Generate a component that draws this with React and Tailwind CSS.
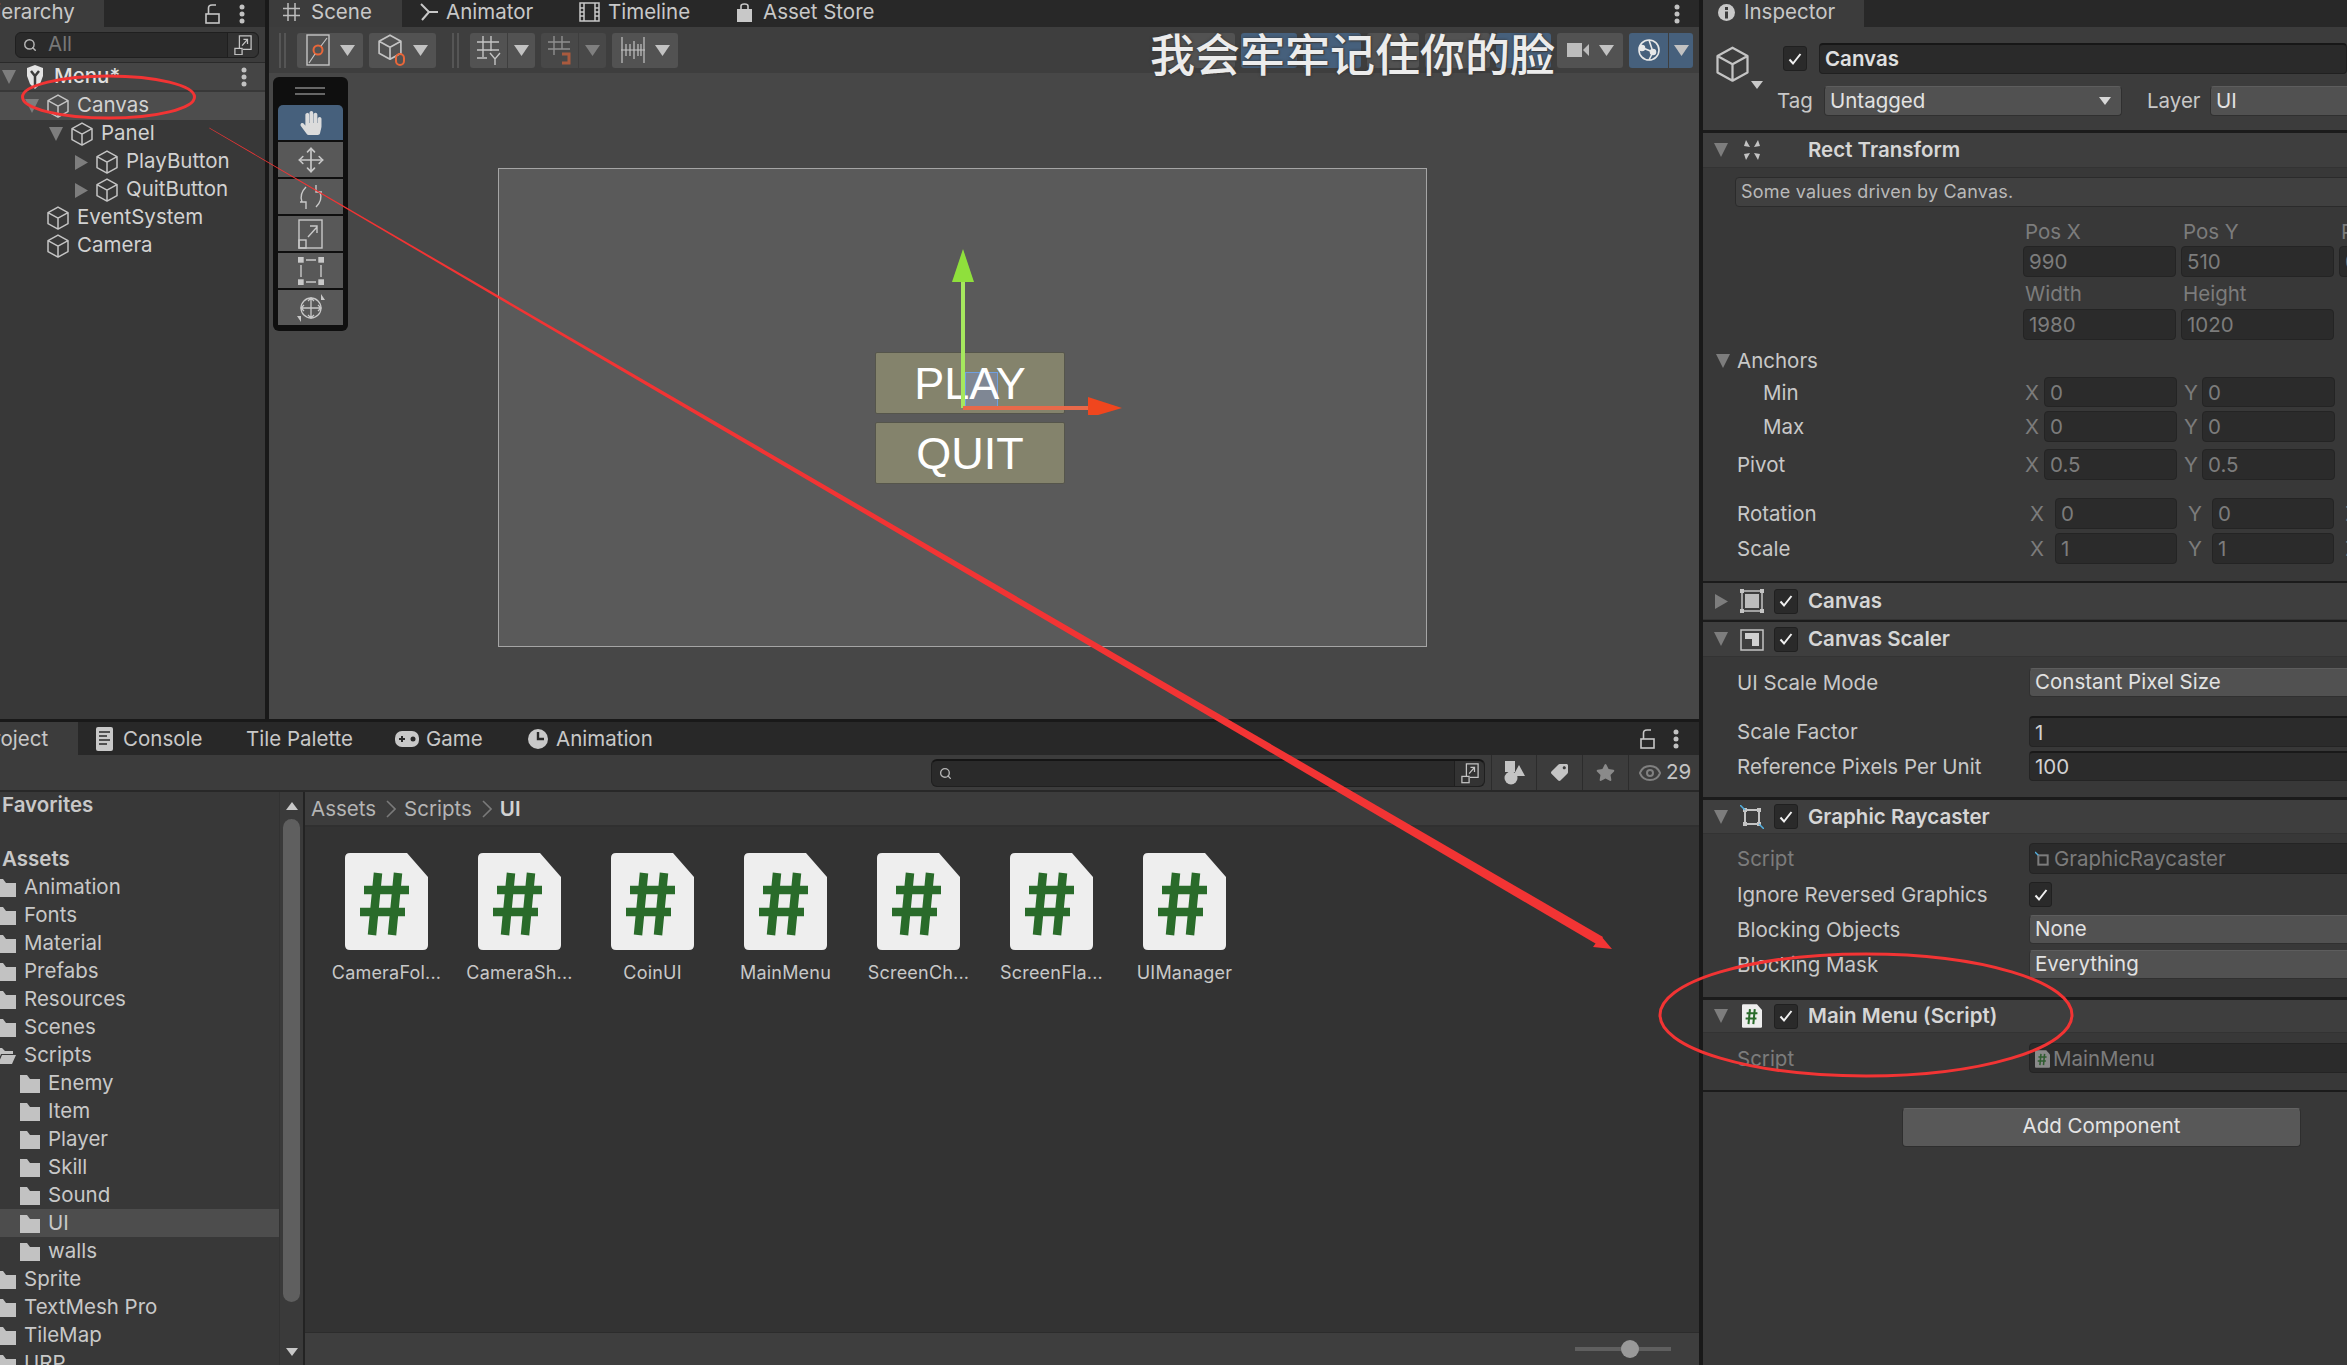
import { FaHandPaper, FaStar, FaTag } from 'react-icons/fa';
import { Move, Search, Eye } from 'lucide-react';

const HIER = [
  { name: 'Canvas', depth: 0, fold: 'down', sel: true },
  { name: 'Panel', depth: 1, fold: 'down' },
  { name: 'PlayButton', depth: 2, fold: 'right' },
  { name: 'QuitButton', depth: 2, fold: 'right' },
  { name: 'EventSystem', depth: 0 },
  { name: 'Camera', depth: 0 },
];

const TREE = [
  ['Animation', 0], ['Fonts', 0], ['Material', 0], ['Prefabs', 0], ['Resources', 0], ['Scenes', 0],
  ['Scripts', 0, 'open'], ['Enemy', 1], ['Item', 1], ['Player', 1], ['Skill', 1], ['Sound', 1],
  ['UI', 1, 'sel'], ['walls', 1], ['Sprite', 0], ['TextMesh Pro', 0], ['TileMap', 0], ['URP', 0],
];

const FILES = ['CameraFol...', 'CameraSh...', 'CoinUI', 'MainMenu', 'ScreenCh...', 'ScreenFla...', 'UIManager'];

function Tri({ dir = 'down', dim }) {
  const fill = dim ? '#6a6a6a' : '#7d7d7d';
  if (dir === 'right') {
    return (
      <svg width="13" height="15" viewBox="0 0 13 15" className="shrink-0">
        <path d="M0 0 L13 7.5 L0 15 Z" fill={fill} />
      </svg>
    );
  }
  return (
    <svg width="14" height="14" viewBox="0 0 14 14" className="shrink-0">
      <path d="M0 0 H14 L7 14 Z" fill={fill} />
    </svg>
  );
}

function Caret({ color = '#c2c2c2', small }) {
  return (
    <svg width={small ? 12 : 15} height={small ? 8 : 11} viewBox="0 0 15 11" preserveAspectRatio="none" className="shrink-0">
      <path d="M0 0 H15 L7.5 11 Z" fill={color} />
    </svg>
  );
}

function Cube({ size = 22, color = '#c4c4c4' }) {
  return (
    <svg width={size} height={size * 1.1} viewBox="0 0 22 24" fill="none" stroke={color} strokeWidth="1.5" strokeLinejoin="round" className="shrink-0">
      <path d="M11 1 L21 6.5 V17.5 L11 23 L1 17.5 V6.5 Z M1 6.5 L11 12 L21 6.5 M11 12 V23" />
    </svg>
  );
}

function Folder({ open }) {
  return (
    <svg width="20" height="19" viewBox="0 0 20 19" className="shrink-0">
      {open
        ? <path d="M0 2 H6 L9 5 H17 V8 H5 L1 18 H0 Z M6 9 H20 L16 18 H2 Z" fill="#c2c2c2" />
        : <path d="M0 1 H7 L10 5 H20 V19 H0 Z" fill="#c2c2c2" />}
    </svg>
  );
}

function ScriptIcon({ width = 83, height = 97, sheet = '#eeeeee', green = '#296b2a' }) {
  return (
    <svg width={width} height={height} viewBox="0 0 83 97" className="shrink-0">
      <path d="M5 0 H62 L83 24 V92 Q83 97 78 97 H5 Q0 97 0 92 V5 Q0 0 5 0 Z" fill={sheet} />
      <path d="M33 20 L27 82 M53 20 L47 82 M19 37 H64 M15 59 H60" stroke={green} strokeWidth="8.5" fill="none" />
    </svg>
  );
}

function Dots() {
  return (
    <svg width="6" height="20" viewBox="0 0 6 20" className="shrink-0">
      <circle cx="3" cy="3" r="2.5" fill="#c2c2c2" />
      <circle cx="3" cy="10" r="2.5" fill="#c2c2c2" />
      <circle cx="3" cy="17" r="2.5" fill="#c2c2c2" />
    </svg>
  );
}

function LockIcon() {
  return (
    <svg width="15" height="20" viewBox="0 0 15 20" fill="none" stroke="#c6c6c6" strokeWidth="1.6" className="shrink-0">
      <rect x="1" y="10" width="13" height="9" />
      <path d="M3.5 10 V4 Q3.5 1 7 1 H11" />
    </svg>
  );
}

function ExpandIcon({ w = 20 }) {
  return (
    <svg width={w} height={w * 1.2} viewBox="0 0 20 24" fill="none" stroke="#c4c4c4" strokeWidth="1.4" className="shrink-0">
      <path d="M6 16 V2 H19 V17 H10" />
      <rect x="1" y="16" width="8" height="7" />
      <path d="M9 13 L15 6 M10.5 6 H15 V11" />
    </svg>
  );
}

function Check({ className }) {
  return (
    <div className={`flex items-center justify-center rounded-[3px] bg-[#2a2a2a] border border-[#202020] shrink-0 ${className}`}>
      <svg width="14" height="14" viewBox="0 0 14 14" fill="none" stroke="#f0f0f0" strokeWidth="2">
        <path d="M1.5 7.5 L5 11.5 L12.5 2" />
      </svg>
    </div>
  );
}

function Field({ children, dim, w, h = 'h-[31px]', top }) {
  return (
    <div className={`${w} ${h} flex items-center gap-[3px] shrink-0 rounded-[4px] bg-[#2b2b2b] border border-[#242424] ${top ? 'border-t-[2px] border-t-[#191919]' : ''} pl-[5px] pt-[2px] ${dim ? 'text-[#7c7c7c]' : 'text-[#d2d2d2]'}`}>
      {children}
    </div>
  );
}

function Dropdown({ children, w, h = 'h-[29px]' }) {
  return (
    <div className={`${w} ${h} flex items-center justify-between shrink-0 rounded-[4px] bg-[#515151] border border-[#303030] border-t-[#5d5d5d] pl-[5px] pr-[10px] text-[#e2e2e2]`}>
      {children}
    </div>
  );
}

function Divider({ h = 'h-[3px]' }) {
  return <div className={`${h} bg-[#1b1b1b] shrink-0`} />;
}

function CompHeader({ title, icon, check, dir = 'down', h }) {
  return (
    <div className={`${h} shrink-0 flex items-center bg-[#3e3e3e] border-b border-[#333333] pl-[11px]`}>
      <div className="w-[14px] flex justify-center"><Tri dir={dir} /></div>
      <div className="w-[24px] ml-[12px] flex justify-center">{icon}</div>
      {check ? <Check className="w-[24px] h-[25px] ml-[10px]" /> : <div className="w-[24px] ml-[10px]" />}
      <span className="ml-[10px] pt-[1px] font-semibold text-[#d6d6d6]">{title}</span>
    </div>
  );
}

function VecRow({ label, a, b, indent, h, mt, wide }) {
  return (
    <div className={`flex items-center ${h} ${mt} text-[#c8c8c8]`}>
      <span className={`${wide ? 'w-[293px]' : 'w-[288px]'} shrink-0 pt-[2px] ${indent ? 'pl-[26px]' : ''}`}>{label}</span>
      <span className={`${wide ? 'w-[25px]' : 'w-[19px]'} shrink-0 pt-[2px] text-[#7c7c7c]`}>X</span>
      <Field dim w={wide ? 'w-[122px]' : 'w-[133px]'} h="h-full">{a}</Field>
      <span className={`${wide ? 'w-[24px] ml-[11px]' : 'w-[18px] ml-[7px]'} shrink-0 pt-[2px] text-[#7c7c7c]`}>Y</span>
      <Field dim w={wide ? 'w-[122px]' : 'w-[133px]'} h="h-full">{b}</Field>
      {wide && <span className="ml-[11px] pt-[2px] text-[#7c7c7c]">Z</span>}
    </div>
  );
}

function PropRow({ label, dim, children, mt, h }) {
  return (
    <div className={`flex items-center ${mt} ${h} pl-[34px]`}>
      <span className={`w-[292px] shrink-0 pt-[2px] ${dim ? 'text-[#7c7c7c]' : 'text-[#c8c8c8]'}`}>{label}</span>
      {children}
    </div>
  );
}

function BarButton({ children, w, blue }) {
  return (
    <div className={`${w} h-[35px] shrink-0 flex items-center justify-center gap-[10px] rounded-[3px] ${blue ? 'bg-[#46607c]' : 'bg-[#525252]'}`}>
      {children}
    </div>
  );
}

function Grip() {
  return <div className="w-[7px] h-[35px] shrink-0 border-x-[2px] border-[#555555]" />;
}

function ToolButton({ children, blue, mt }) {
  return (
    <div className={`h-[35px] ${mt} flex items-center justify-center ${blue ? 'bg-[#46607c] rounded-t-[5px]' : 'bg-[#585858]'}`}>
      {children}
    </div>
  );
}

function Hierarchy() {
  return (
    <div className="w-[265px] shrink-0 h-full bg-[#383838] flex flex-col overflow-hidden">
      <div className="h-[27px] shrink-0 bg-[#282828] flex items-center relative">
        <div className="w-[104px] h-full bg-[#3c3c3c] overflow-hidden flex items-center pb-[3px]">
          <span className="-ml-[19px] text-[#c8c8c8] whitespace-nowrap">Hierarchy</span>
        </div>
        <div className="ml-auto flex items-center gap-[19px] pr-[20px]"><LockIcon /><Dots /></div>
      </div>
      <div className="h-[35px] shrink-0 bg-[#3c3c3c] flex items-center pl-[15px] pr-[6px]">
        <div className="flex-1 h-[26px] rounded-[6px] bg-[#2a2a2a] border border-[#1f1f1f] flex items-center pl-[7px]">
          <Search size={14} color="#b5b5b5" strokeWidth={2.5} />
          <span className="ml-[11px] text-[#777777]">All</span>
          <div className="ml-auto w-[31px] h-full border-l border-[#1f1f1f] bg-[#333333] flex items-center justify-center rounded-r-[6px]"><ExpandIcon w={18} /></div>
        </div>
      </div>
      <div className="h-[1px] shrink-0 bg-[#2a2a2a]" />
      <div className="h-[27px] shrink-0 bg-[#454545] flex items-center pl-[2px]">
        <Tri />
        <svg width="20" height="26" viewBox="0 0 20 26" className="ml-[9px] shrink-0">
          <path d="M2 4 L10 1 L18 4 V12 L15 20 L10 25 L5 20 L2 12 Z" fill="#e4e4e4" />
          <path d="M6 7 L10 12 L14 7 M10 12 V21" stroke="#3c3c3c" strokeWidth="2.5" fill="none" />
        </svg>
        <span className="ml-[9px] font-medium text-[#e0e0e0]">Menu*</span>
        <div className="ml-auto pr-[18px]"><Dots /></div>
      </div>
      <div className="h-[2px] shrink-0" />
      {HIER.map(row => (
        <div key={row.name} className={`h-[28px] shrink-0 flex items-center ${row.sel ? 'bg-[#4d4d4d]' : ''}`}>
          {row.depth === 0 && <div className="w-[25px] shrink-0" />}
          {row.depth === 1 && <div className="w-[49px] shrink-0" />}
          {row.depth === 2 && <div className="w-[75px] shrink-0" />}
          <div className={row.depth === 2 ? 'w-[21px] shrink-0' : 'w-[22px] shrink-0'}>
            {row.fold && <Tri dir={row.fold} />}
          </div>
          <Cube />
          <span className="ml-[8px] pb-[2px] text-[#d2d2d2] whitespace-nowrap">{row.name}</span>
        </div>
      ))}
    </div>
  );
}

function SceneView() {
  return (
    <div className="flex-1 h-full min-w-0 flex flex-col bg-[#474747]">
      <div className="h-[27px] shrink-0 bg-[#282828] flex items-center text-[#c8c8c8]">
        <div className="w-[133px] h-full bg-[#3c3c3c] pl-[14px] flex items-center gap-[11px] pb-[3px]">
          <svg width="17" height="20" viewBox="0 0 17 20" fill="none" stroke="#bdbdbd" strokeWidth="1.5"><path d="M5 1 V19 M12 1 V19 M0 6.5 H17 M0 13.5 H17" /></svg>
          Scene
        </div>
        <div className="w-[177px] h-full pl-[18px] flex items-center gap-[8px] pb-[3px]">
          <svg width="18" height="18" viewBox="0 0 18 18" fill="none" stroke="#c8c8c8" strokeWidth="2"><path d="M1 1 L9 9 L2 17 M9 9 H18" /></svg>
          Animator
        </div>
        <div className="w-[157px] h-full flex items-center gap-[8px] pb-[3px]">
          <svg width="21" height="20" viewBox="0 0 21 20" fill="none" stroke="#c8c8c8" strokeWidth="1.5"><rect x="1" y="1" width="19" height="18" /><path d="M5 1 V19 M16 1 V19 M1 6 H5 M1 10 H5 M1 14 H5 M16 6 H20 M16 10 H20 M16 14 H20" /></svg>
          Timeline
        </div>
        <div className="flex items-center gap-[10px] pb-[3px]">
          <svg width="17" height="19" viewBox="0 0 17 19"><path d="M1 6 H16 V19 H1 Z" fill="#c8c8c8" /><path d="M5 6 V3 Q5 1 8.5 1 Q12 1 12 3 V6" fill="none" stroke="#c8c8c8" strokeWidth="1.6" /></svg>
          Asset Store
        </div>
        <div className="ml-auto pr-[19px]"><Dots /></div>
      </div>
      <div className="h-[46px] shrink-0 bg-[#3e3e3e] flex items-center pl-[10px] relative">
        <Grip />
        <div className="w-[11px] shrink-0" />
        <BarButton w="w-[66px]">
          <svg width="24" height="32" viewBox="0 0 24 32" fill="none"><rect x="1" y="1" width="22" height="30" stroke="#c4c4c4" strokeWidth="1.4" /><circle cx="12" cy="16" r="4.5" stroke="#e8673a" strokeWidth="2" /><path d="M3 29 L9 20 M15 12 L21 4" stroke="#c4c4c4" strokeWidth="1.2" /></svg>
          <Caret />
        </BarButton>
        <div className="w-[6px] shrink-0" />
        <BarButton w="w-[67px]">
          <div className="relative w-[25px] h-[32px]">
            <Cube size={24} />
            <div className="absolute right-[-2px] bottom-0 w-[10px] h-[13px] rounded-full border-[2px] border-[#e8673a]" />
          </div>
          <Caret />
        </BarButton>
        <div className="w-[16px] shrink-0" />
        <Grip />
        <div className="w-[11px] shrink-0" />
        <div className="w-[65px] h-[35px] flex items-center rounded-[3px] bg-[#525252] shrink-0">
          <div className="w-[38px] h-full flex items-center justify-center border-r border-[#3e3e3e] text-[#d0d0d0]">
            <svg width="24" height="30" viewBox="0 0 24 30" fill="none" stroke="#c4c4c4" strokeWidth="1.4"><path d="M6 1 V22 M14 1 V16 M0 7 H22 M0 15 H22 M0 23 H10 M13 18 L18 24 L23 18 M18 24 V30" /></svg>
          </div>
          <div className="flex-1 flex justify-center"><Caret /></div>
        </div>
        <div className="w-[6px] shrink-0" />
        <div className="w-[65px] h-[35px] flex items-center rounded-[3px] bg-[#484848] shrink-0">
          <div className="w-[38px] h-full flex items-center justify-center border-r border-[#3e3e3e]">
            <svg width="24" height="30" viewBox="0 0 24 30" fill="none" strokeWidth="1.4"><path d="M6 1 V20 M14 1 V14 M0 7 H22 M0 14 H22" stroke="#8f8f8f" /><path d="M14 19 H21 V28 H14" stroke="#a95a3e" strokeWidth="3" /></svg>
          </div>
          <div className="flex-1 flex justify-center"><Caret color="#7f7f7f" /></div>
        </div>
        <div className="w-[6px] shrink-0" />
        <BarButton w="w-[66px]">
          <svg width="24" height="30" viewBox="0 0 24 30" fill="none" stroke="#c4c4c4" strokeWidth="1.2"><path d="M1 2 V28 M23 2 V28 M0 15 H24 M5 9 V21 M9 9 V21 M13 6 V24 M17 9 V21 M20 9 V21" /></svg>
          <Caret />
        </BarButton>
        <div className="ml-auto flex items-center gap-[6px] pr-[6px]">
          <BarButton w="w-[68px]" />
          <BarButton w="w-[56px]" blue />
          <BarButton w="w-[58px]" blue />
          <BarButton w="w-[52px]" />
          <BarButton w="w-[65px]" />
          <BarButton w="w-[55px]" blue />
          <BarButton w="w-[66px]">
            <svg width="22" height="18" viewBox="0 0 22 18"><rect x="0" y="2" width="15" height="14" fill="#bdbdbd" /><path d="M16 9 L22 3 V15 Z" fill="#bdbdbd" /></svg>
            <Caret />
          </BarButton>
          <div className="w-[64px] h-[35px] shrink-0 flex items-center rounded-[3px] bg-[#46607c]">
            <div className="w-[40px] h-full flex items-center justify-center border-r border-[#3e3e3e]">
              <svg width="24" height="24" viewBox="0 0 24 24" fill="none" stroke="#e8e8e8" strokeWidth="1.6"><circle cx="12" cy="12" r="10" /><path d="M6 10 L16 14 L12 2 M16 14 L12 22" /><circle cx="5" cy="10" r="2.5" fill="#e8e8e8" /><circle cx="16" cy="14" r="2.5" fill="#e8e8e8" /></svg>
            </div>
            <div className="flex-1 flex justify-center"><Caret /></div>
          </div>
        </div>
      </div>

      {/* free canvas of the scene */}
      <div className="flex-1 relative">
        <div className="absolute left-[229px] top-[95px] w-[929px] h-[479px] bg-[#5a5a5a] border border-[#a5a5a5]" />
        <div className="absolute left-[606px] top-[279px] w-[190px] h-[62px] rounded-[2px] bg-[#84836c] border border-[#55554b] flex items-center justify-center font-['Liberation_Sans',sans-serif] text-[45px] text-white">
          <div className="absolute left-[89px] top-[19px] w-[33px] h-[35px] bg-[#7f8794] border border-[#6f9fe0]" />
          <span className="relative">PLAY</span>
        </div>
        <div className="absolute left-[606px] top-[349px] w-[190px] h-[62px] rounded-[2px] bg-[#84836c] border border-[#55554b] flex items-center justify-center font-['Liberation_Sans',sans-serif] text-[45px] text-white">QUIT</div>
        <svg width="190" height="170" viewBox="0 0 190 170" className="absolute left-[680px] top-[172px]">
          <path d="M14 4 L25 37 H3 Z" fill="#8fe03c" />
          <path d="M12 37 H16 V163 H12 Z" fill="#a6e85e" />
          <path d="M14 161 H140 V165 H14 Z" fill="#e8694a" />
          <path d="M139 152 L173 163 L139 173 Z" fill="#f0461e" />
        </svg>
        <div className="absolute left-[4px] top-[4px] w-[75px] h-[254px] rounded-[6px] bg-[#0f0f0f] px-[5px] pt-[28px]">
          <div className="absolute left-[22px] top-[10px] w-[30px] h-[8px] border-y-[2px] border-[#666666]" />
          <ToolButton blue><FaHandPaper size={24} color="#dcdcdc" /></ToolButton>
          <ToolButton mt="mt-[2px]"><Move size={28} color="#c8c8c8" strokeWidth={1.4} /></ToolButton>
          <ToolButton mt="mt-[2px]">
            <svg width="26" height="26" viewBox="0 0 26 26" fill="none" stroke="#c8c8c8" strokeWidth="1.4"><path d="M8 3 Q1 10 4 18 M18 23 Q25 16 22 8 M18 1 V8 H24 M8 25 V18 H2" /></svg>
          </ToolButton>
          <ToolButton mt="mt-[2px]">
            <svg width="25" height="30" viewBox="0 0 25 30" fill="none" stroke="#c8c8c8" strokeWidth="1.4"><rect x="1" y="1" width="23" height="28" /><rect x="1" y="21" width="7" height="8" /><path d="M10 18 L19 8 M12 7 H19 V14" /></svg>
          </ToolButton>
          <ToolButton mt="mt-[2px]">
            <svg width="26" height="28" viewBox="0 0 26 28" fill="none" stroke="#c8c8c8" strokeWidth="1.4"><path d="M3 8 V20 M23 8 V20 M8 3 H18 M8 25 H18" /><rect x="0" y="0" width="5" height="5" fill="#c8c8c8" /><rect x="21" y="0" width="5" height="5" fill="#c8c8c8" /><rect x="0" y="23" width="5" height="5" fill="#c8c8c8" /><rect x="21" y="23" width="5" height="5" fill="#c8c8c8" /></svg>
          </ToolButton>
          <ToolButton mt="mt-[2px]">
            <svg width="28" height="28" viewBox="0 0 28 28" fill="none" stroke="#c8c8c8" strokeWidth="1.3"><circle cx="14" cy="14" r="10" /><path d="M14 4 V24 M4 14 H24 M11 7 L14 4 L17 7 M11 21 L14 24 L17 21 M7 11 L4 14 L7 17 M21 11 L24 14 L21 17" /><path d="M24 0 V6 H28 Z M0 22 H4 V28 Z" fill="#c8c8c8" stroke="none" /></svg>
          </ToolButton>
        </div>
      </div>
    </div>
  );
}

function ProjectPanel() {
  return (
    <div className="flex-1 min-h-0 flex flex-col bg-[#383838]">
      <div className="h-[33px] shrink-0 bg-[#282828] flex items-center text-[#c8c8c8]">
        <div className="w-[78px] h-full bg-[#3c3c3c] overflow-hidden flex items-center pt-[2px]">
          <span className="-ml-[20px]">Project</span>
        </div>
        <div className="w-[168px] pl-[18px] flex items-center gap-[10px]">
          <svg width="17" height="24" viewBox="0 0 17 24"><rect width="17" height="24" rx="2" fill="#c8c8c8" /><path d="M3 5 H14 M3 9 H11 M3 13 H14 M3 17 H11" stroke="#282828" strokeWidth="1.6" /></svg>
          <span className="pt-[2px]">Console</span>
        </div>
        <div className="w-[149px] pt-[2px]">Tile Palette</div>
        <div className="w-[133px] flex items-center gap-[7px]">
          <svg width="24" height="16" viewBox="0 0 24 16"><rect width="24" height="16" rx="7" fill="#c8c8c8" /><path d="M4 8 H10 M7 5 V11" stroke="#282828" strokeWidth="2" /><circle cx="18" cy="8" r="2.5" fill="#282828" /></svg>
          <span className="pt-[2px]">Game</span>
        </div>
        <div className="flex items-center gap-[8px]">
          <svg width="20" height="24" viewBox="0 0 20 20"><circle cx="10" cy="10" r="10" fill="#c8c8c8" /><path d="M10 3 V10 H16" stroke="#282828" strokeWidth="2.4" fill="none" /></svg>
          <span className="pt-[2px]">Animation</span>
        </div>
        <div className="ml-auto flex items-center gap-[18px] pr-[20px]"><LockIcon /><Dots /></div>
      </div>
      <div className="h-[35px] shrink-0 bg-[#3c3c3c] flex items-center">
        <div className="ml-[931px] w-[554px] h-[28px] rounded-[6px] bg-[#2a2a2a] border border-[#1f1f1f] border-t-[2px] border-t-[#151515] flex items-center pl-[7px]">
          <Search size={13} color="#b5b5b5" strokeWidth={2.5} />
          <div className="ml-auto w-[30px] h-full border-l border-[#1f1f1f] bg-[#333333] flex items-center justify-center rounded-r-[6px]"><ExpandIcon w={18} /></div>
        </div>
        <div className="ml-[6px] w-[45px] h-full border-l border-[#2c2c2c] flex items-center justify-center">
          <svg width="22" height="24" viewBox="0 0 22 24"><rect x="2" y="0" width="10" height="11" fill="#c4c4c4" /><circle cx="8" cy="17" r="6.5" fill="#c4c4c4" /><path d="M16 4 L22 15 H10 Z" fill="#c4c4c4" /></svg>
        </div>
        <div className="w-[46px] h-full border-l border-[#2c2c2c] flex items-center justify-center"><FaTag size={17} color="#c4c4c4" className="scale-x-[-1]" /></div>
        <div className="w-[46px] h-full border-l border-[#2c2c2c] flex items-center justify-center"><FaStar size={19} color="#8a8a8a" /></div>
        <div className="flex-1 h-full border-l border-[#2c2c2c] flex items-center pl-[9px] gap-[4px] text-[#c4c4c4]">
          <Eye size={24} color="#808080" />29
        </div>
      </div>
      <div className="h-[2px] shrink-0 bg-[#282828]" />
      <div className="flex-1 min-h-0 flex overflow-hidden">
        <div className="w-[279px] shrink-0 overflow-hidden text-[#c8c8c8]">
          <div className="h-[26px] pl-[2px] flex items-center font-semibold">Favorites</div>
          <div className="h-[27px]" />
          <div className="h-[28px] pl-[2px] flex items-center font-semibold">Assets</div>
          {TREE.map(([name, depth, state]) => (
            <div key={name} className={`h-[28px] flex items-center gap-[8px] ${depth ? 'pl-[20px]' : '-ml-[4px]'} ${state === 'sel' ? 'bg-[#4d4d4d]' : ''}`}>
              <Folder open={state === 'open'} />
              <span className="whitespace-nowrap">{name}</span>
            </div>
          ))}
        </div>
        <div className="w-[24px] shrink-0 bg-[#3a3a3a] border-l border-[#323232] flex flex-col items-center pt-[10px]">
          <svg width="12" height="8" viewBox="0 0 12 8"><path d="M6 0 L12 8 H0 Z" fill="#c8c8c8" /></svg>
          <div className="w-[17px] h-[483px] mt-[9px] rounded-full bg-[#5f5f5f]" />
          <svg width="12" height="8" viewBox="0 0 12 8" className="mt-[46px]"><path d="M0 0 H12 L6 8 Z" fill="#c8c8c8" /></svg>
        </div>
        <div className="w-[2px] shrink-0 bg-[#232323]" />
        <div className="flex-1 min-w-0 flex flex-col">
          <div className="h-[35px] shrink-0 bg-[#3c3c3c] border-b-[2px] border-[#303030] flex items-center pl-[6px] text-[#b4b4b4]">
            <span className="pt-[2px]">Assets</span>
            <svg width="10" height="18" viewBox="0 0 10 18" fill="none" stroke="#7a7a7a" strokeWidth="1.6" className="ml-[10px]"><path d="M1 1 L9 9 L1 17" /></svg>
            <span className="ml-[8px] pt-[2px]">Scripts</span>
            <svg width="10" height="18" viewBox="0 0 10 18" fill="none" stroke="#7a7a7a" strokeWidth="1.6" className="ml-[10px]"><path d="M1 1 L9 9 L1 17" /></svg>
            <span className="ml-[8px] pt-[2px] font-semibold text-[#d2d2d2]">UI</span>
          </div>
          <div className="flex-1 bg-[#333333] flex items-start pl-[15px] pt-[26px]">
            {FILES.map(name => (
              <div key={name} className="w-[133px] shrink-0 flex flex-col items-center">
                <ScriptIcon />
                <span className="mt-[11px] text-[18px] leading-[24px] tracking-[0.2px] text-[#c8c8c8] whitespace-nowrap">{name}</span>
              </div>
            ))}
          </div>
          <div className="h-[33px] shrink-0 bg-[#3e3e3e] border-t border-[#2c2c2c] flex items-center justify-end pr-[28px]">
            <div className="relative w-[96px] h-[4px] bg-[#5f5f5f]">
              <div className="absolute left-[46px] -top-[7px] w-[18px] h-[18px] rounded-full bg-[#999999]" />
            </div>
          </div>
        </div>
      </div>
    </div>
  );
}

function Inspector() {
  return (
    <div className="flex-1 min-w-0 h-full bg-[#383838] flex flex-col overflow-hidden">
      <div className="h-[27px] shrink-0 bg-[#282828]">
        <div className="w-[161px] h-full bg-[#3c3c3c] pl-[15px] pb-[3px] flex items-center gap-[9px] text-[#c8c8c8]">
          <svg width="17" height="17" viewBox="0 0 17 17"><circle cx="8.5" cy="8.5" r="8.5" fill="#c8c8c8" /><rect x="7" y="3" width="3" height="3" fill="#3c3c3c" /><rect x="7" y="7.5" width="3" height="7" fill="#3c3c3c" /></svg>
          Inspector
        </div>
      </div>
      <div className="h-[103px] shrink-0 bg-[#3c3c3c] flex">
        <div className="w-[74px] shrink-0 pl-[13px] pt-[19px] relative">
          <Cube size={33} />
          <div className="absolute left-[48px] top-[54px]"><Caret color="#c8c8c8" small /></div>
        </div>
        <div className="flex-1 min-w-0">
          <div className="flex items-center h-[31px] mt-[16px] pl-[6px]">
            <Check className="w-[24px] h-[25px]" />
            <div className="ml-[12px] flex-1 h-full rounded-[4px] bg-[#2a2a2a] border border-[#202020] border-t-[2px] border-t-[#171717] pl-[5px] flex items-center font-semibold text-[#e0e0e0]">Canvas</div>
          </div>
          <div className="flex items-center h-[30px] mt-[12px] text-[#c8c8c8]">
            <span className="w-[47px] shrink-0 pt-[1px]">Tag</span>
            <Dropdown w="w-[298px]" h="h-full">Untagged<Caret color="#d8d8d8" small /></Dropdown>
            <span className="ml-[25px] w-[63px] shrink-0 pt-[1px]">Layer</span>
            <Dropdown w="w-[300px]" h="h-full">UI</Dropdown>
          </div>
        </div>
      </div>
      <Divider />

      <CompHeader h="h-[35px]" title="Rect Transform" icon={
        <svg width="22" height="22" viewBox="0 0 22 22" fill="#c4c4c4"><path d="M5 1 L9 8 L3 7 Z M17 1 L19 7 L13 8 Z M3 15 L9 14 L5 21 Z M13 14 L19 15 L17 21 Z" /></svg>
      } />
      <div className="h-[413px] shrink-0 pl-[34px]">
        <div className="h-[30px] mt-[9px] -ml-[2px] rounded-[4px] bg-[#404040] border border-[#2b2b2b] flex items-center pl-[5px] text-[18px] tracking-[0.2px] text-[#b9b9b9] w-[640px]">Some values driven by Canvas.</div>
        <div className="flex h-[24px] mt-[15px] pl-[288px] text-[#7c7c7c] whitespace-nowrap">
          <span className="w-[158px] shrink-0">Pos X</span><span className="w-[158px] shrink-0">Pos Y</span><span>Pos Z</span>
        </div>
        <div className="flex h-[31px] ml-[286px] gap-[5px]">
          <Field dim w="w-[153px]" h="h-full">990</Field>
          <Field dim w="w-[153px]" h="h-full">510</Field>
          <Field dim w="w-[153px]" h="h-full">0</Field>
        </div>
        <div className="flex h-[32px] items-center pl-[288px] pt-[2px] text-[#7c7c7c]">
          <span className="w-[158px] shrink-0">Width</span><span>Height</span>
        </div>
        <div className="flex h-[31px] ml-[286px] gap-[5px]">
          <Field dim w="w-[153px]" h="h-full">1980</Field>
          <Field dim w="w-[153px]" h="h-full">1020</Field>
        </div>
        <div className="flex items-center h-[24px] mt-[9px] -ml-[21px] text-[#c8c8c8]">
          <Tri />
          <span className="ml-[7px]">Anchors</span>
        </div>
        <VecRow label="Min" indent a="0" b="0" h="h-[30px]" mt="mt-[4px]" />
        <VecRow label="Max" indent a="0" b="0" h="h-[31px]" mt="mt-[4px]" />
        <VecRow label="Pivot" a="0.5" b="0.5" h="h-[31px]" mt="mt-[7px]" />
        <VecRow label="Rotation" wide a="0" b="0" h="h-[31px]" mt="mt-[18px]" />
        <VecRow label="Scale" wide a="1" b="1" h="h-[31px]" mt="mt-[4px]" />
      </div>
      <Divider h="h-[2px]" />

      <CompHeader h="h-[37px]" dir="right" check title="Canvas" icon={
        <svg width="24" height="24" viewBox="0 0 24 24"><rect x="2" y="2" width="20" height="20" fill="none" stroke="#c4c4c4" strokeWidth="1.5" /><rect x="5" y="5" width="14" height="14" fill="#bdbdbd" /><path d="M0 0 H4 V4 H0 Z M20 0 H24 V4 H20 Z M0 20 H4 V24 H0 Z M20 20 H24 V24 H20 Z" fill="#c4c4c4" /></svg>
      } />
      <Divider h="h-[2px]" />

      <CompHeader h="h-[35px]" check title="Canvas Scaler" icon={
        <svg width="24" height="24" viewBox="0 0 24 24"><rect x="1" y="3" width="22" height="20" fill="none" stroke="#c4c4c4" strokeWidth="1.5" /><path d="M5 6 H19 V19 H12 V12 H5 Z" fill="#d0d0d0" /></svg>
      } />
      <div className="h-[140px] shrink-0">
        <PropRow label="UI Scale Mode" mt="mt-[11px]" h="h-[29px]"><Dropdown w="w-[400px]">Constant Pixel Size</Dropdown></PropRow>
        <PropRow label="Scale Factor" mt="mt-[19px]" h="h-[31px]"><Field w="w-[400px]" top>1</Field></PropRow>
        <PropRow label="Reference Pixels Per Unit" mt="mt-[4px]" h="h-[30px]"><Field w="w-[400px]" h="h-[30px]" top>100</Field></PropRow>
      </div>
      <Divider />

      <CompHeader h="h-[34px]" check title="Graphic Raycaster" icon={
        <svg width="24" height="24" viewBox="0 0 24 24" fill="none"><rect x="5" y="5" width="14" height="14" stroke="#c4c4c4" strokeWidth="2" /><path d="M3 3 H7 V7 H3 Z M17 3 H21 V7 H17 Z M3 17 H7 V21 H3 Z M17 17 H21 V21 H17 Z" fill="#c4c4c4" /><path d="M0 0 L5 5 M19 19 L24 24" stroke="#52b0e0" strokeWidth="1.5" /></svg>
      } />
      <div className="h-[163px] shrink-0">
        <PropRow label="Script" dim mt="mt-[9px]" h="h-[31px]">
          <Field dim w="w-[400px]">
            <svg width="16" height="18" viewBox="0 0 24 24" fill="none"><rect x="5" y="5" width="14" height="14" stroke="#7c7c7c" strokeWidth="3" /><path d="M0 0 L5 5" stroke="#52b0e0" strokeWidth="2" /></svg>
            GraphicRaycaster
          </Field>
        </PropRow>
        <PropRow label="Ignore Reversed Graphics" mt="mt-[8px]" h="h-[25px]"><Check className="w-[23px] h-[25px]" /></PropRow>
        <PropRow label="Blocking Objects" mt="mt-[8px]" h="h-[29px]"><Dropdown w="w-[400px]">None</Dropdown></PropRow>
        <PropRow label="Blocking Mask" mt="mt-[6px]" h="h-[29px]"><Dropdown w="w-[400px]">Everything</Dropdown></PropRow>
      </div>
      <Divider />

      <CompHeader h="h-[33px]" check title="Main Menu (Script)" icon={<ScriptIcon width={20} height={24} />} />
      <div className="h-[57px] shrink-0">
        <PropRow label="Script" dim mt="mt-[10px]" h="h-[30px]">
          <Field dim w="w-[400px]" h="h-[30px]">
            <ScriptIcon width={15} height={20} sheet="#8a8a8a" green="#2f5c30" />
            MainMenu
          </Field>
        </PropRow>
      </div>
      <Divider h="h-[2px]" />
      <div className="flex-1 pl-[199px] pt-[16px]">
        <div className="w-[399px] h-[39px] rounded-[4px] bg-[#585858] border border-[#2e2e2e] border-t-[#636363] pb-[2px] flex items-center justify-center text-[#e4e4e4]">Add Component</div>
      </div>
    </div>
  );
}

export default function App() {
  return (
    <div className="relative w-[2347px] h-[1365px] overflow-hidden flex bg-[#191919] font-['Inter',sans-serif] text-[20.5px] leading-none">
      <div className="w-[1699px] shrink-0 h-full flex flex-col">
        <div className="h-[719px] shrink-0 flex">
          <Hierarchy />
          <div className="w-[4px] shrink-0 bg-[#191919]" />
          <SceneView />
        </div>
        <div className="h-[3px] shrink-0 bg-[#191919]" />
        <ProjectPanel />
      </div>
      <div className="w-[4px] shrink-0 bg-[#191919]" />
      <Inspector />

      {/* caption burned into the screenshot */}
      <div className="absolute left-[1150px] top-[26px] font-['Noto_Sans_CJK_SC',sans-serif] font-medium text-[45px] leading-[54px] text-[#ececec] whitespace-nowrap [text-shadow:0_0_3px_#333,1px_1px_1px_#444]">我会牢牢记住你的脸</div>

      {/* red annotations */}
      <svg width="2347" height="1365" viewBox="0 0 2347 1365" className="absolute left-0 top-0 pointer-events-none">
        <path d="M209 127.5 L209.6 128.5 L1598 945 L1603 937 Z" fill="#f23434" />
        <path d="M1612 949 L1593 947 L1601 936 Z" fill="#f23434" />
        <ellipse cx="108.5" cy="97" rx="86" ry="21" fill="none" stroke="#f23434" strokeWidth="3" />
        <ellipse cx="1866" cy="1015" rx="206" ry="61" fill="none" stroke="#f23434" strokeWidth="3" />
      </svg>
    </div>
  );
}
